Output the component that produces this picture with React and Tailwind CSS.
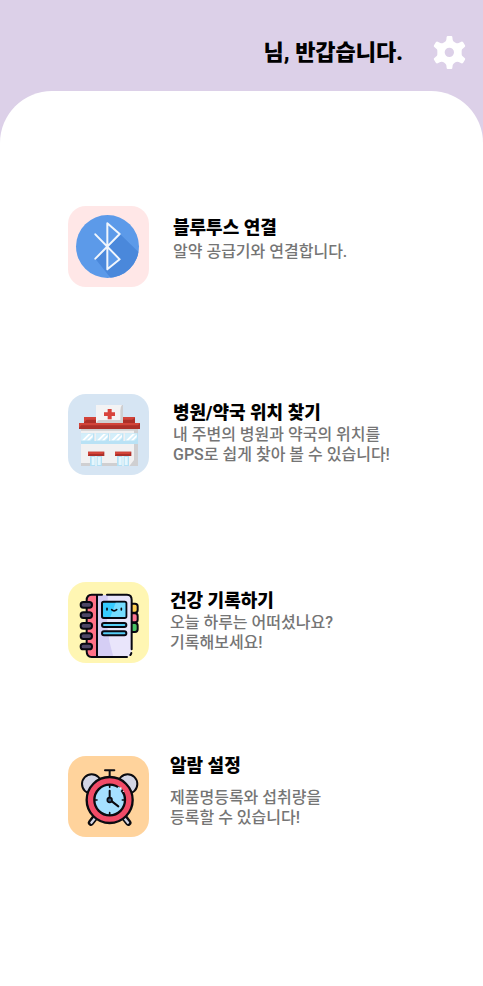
import React from 'react';

function GearIcon() {
  return (
    <svg viewBox="579 48 99 99" className="block size-[33px]" aria-hidden="true">
      <path
        fill="#fff"
        fillRule="evenodd"
        d="M620 50q1-2 3-2h11q3 0 3 3l1 8q1 5 6 8l4 2q4 2 8 0l8-4q3-1 5 1l6 10q2 3-1 5l-6 5q-3 2-3 6v11q0 4 3 6l6 5q3 2 1 5l-6 10q-2 2-5 1l-8-4q-4-2-8 0l-4 2q-5 3-6 8l-1 8q0 3-3 3h-11q-3 0-3-3l-1-8q-1-5-6-8l-4-2q-4-2-8 0l-8 4q-3 1-5-1l-6-10q-2-3 1-5l6-5q3-2 3-6v-11q0-4-3-6l-6-5q-3-2-1-5l6-10q2-2 5-1l8 4q4 2 8 0l4-2q5-3 6-8zM628 83a14 14 0 1 0 0 28a14 14 0 1 0 0-28z"
      />
    </svg>
  );
}

function BluetoothIcon() {
  return (
    <svg viewBox="24 24 243 243" className="block size-full" aria-hidden="true">
      <defs>
        <clipPath id="bt-disc">
          <circle cx="142.500" cy="145.500" r="94.500" />
        </clipPath>
      </defs>
      <circle cx="142.500" cy="145.500" r="94.500" fill="#5c9ae9" />
      <path d="M180 108L260 186V260H168L106 182L142 147V215L180 184L146 147z" fill="#4a88db" clipPath="url(#bt-disc)" />
      <path d="M106 109L179 184L142 214V76L179 108L106 182" fill="none" stroke="#f1f6fc" strokeWidth="6" strokeLinecap="round" strokeLinejoin="round" />
    </svg>
  );
}

function HospitalIcon() {
  return (
    <svg viewBox="24 24 243 243" className="block size-full" aria-hidden="true">
      <path d="M63 128H234V240H63z" fill="#f1f1f2" />
      <path d="M222 128H234V240H208L222 222z" fill="#cfcfd1" />
      <path d="M63 231H90V240H63zM125 231H171V240H125zM63 128H234V134H63z" fill="#cfcfd1" />
      <path d="M72 93H225V112H72z" fill="#ac2f29" />
      <path d="M72 93H108V101H80L72 109zM189 93H225V95L216 101H189z" fill="#d24339" />
      <path d="M57 111H240V129H57z" fill="#ac2f29" />
      <path d="M57 111H240L234 118H64L57 125z" fill="#d24339" />
      <path d="M108 57H189V111H108z" fill="#cfcfd1" />
      <path d="M108 57H186Q181 62 181 74V102H116L108 110z" fill="#f3f3f4" />
      <path d="M143 69H155V79H165V90H155V100H143V90H132V79H143z" fill="#d8433b" />
      <path d="M63 142H234V174H63z" fill="#b9e2f5" />
      {[63, 108, 151, 195].map((x) => (
        <g key={x}>
          <path d={`M${x} 142H${x + 36}V156L${x + 28} 164H${x}z`} fill="#d3eefa" />
          <path d={`M${x + 3} 163L${x + 22} 144H${x + 30}L${x + 11} 163zM${x + 18} 163L${x + 35} 146V153L${x + 25} 163z`} fill="#fff" />
        </g>
      ))}
      <path d="M103 142H108V165H103zM147 142H151V165H147zM190 142H195V165H190z" fill="#f1f1f2" />
      {[84, 165].map((x) => (
        <g key={x}>
          <path d={`M${x + 6} 209H${x + 42}V240H${x + 6}z`} fill="#b3e0f5" />
          <path d={`M${x + 11} 213H${x + 20}V237H${x + 11}zM${x + 29} 213H${x + 38}V237H${x + 29}z`} fill="#e5f6fd" />
          <path d={`M${x + 22} 209H${x + 26}V240H${x + 22}z`} fill="#f1f6f8" />
          <path d={`M${x} 197H${x + 49}V210H${x}z`} fill="#ac2f29" />
          <path d={`M${x} 197H${x + 49}L${x + 44} 204H${x + 4}L${x} 208z`} fill="#d24339" />
        </g>
      ))}
    </svg>
  );
}

function NotebookIcon() {
  return (
    <svg viewBox="24 24 243 243" className="block size-full" aria-hidden="true">
      <g stroke="#080811" strokeWidth="6">
        <rect x="207" y="89" width="26" height="27" rx="8" fill="#ffd052" />
        <rect x="207" y="118" width="26" height="27" rx="8" fill="#ff7791" />
        <rect x="207" y="147" width="26" height="27" rx="8" fill="#49c464" />
      </g>
      <path d="M95 63H203Q215 63 215 78V234Q215 248 203 248H95Q81 248 81 232V79Q81 63 95 63z" fill="#e9e5fb" />
      <path d="M111 63H144Q132 160 160 248H111z" fill="#d5cef5" />
      <path d="M95 63H111V248H95Q81 248 81 232V79Q81 63 95 63z" fill="#ff7187" />
      <path d="M126 62H95Q80 62 80 79V232Q80 249 95 249H201M141 62H201Q215 62 215 78V226M214 237Q213 241 211 243M111 62V249" fill="none" stroke="#080811" strokeWidth="6" strokeLinecap="round" />
      <g stroke="#080811" strokeWidth="6">
        {[84, 115, 147, 178, 209].map((y) => (
          <rect key={y} x="62" y={y} width="34" height="17" rx="8" fill="#4d4666" />
        ))}
        <rect x="126" y="83" width="73" height="49" rx="5" fill="#35cbff" />
        <rect x="126" y="147" width="73" height="12" rx="6" fill="#54cef6" />
        <rect x="126" y="172" width="73" height="12" rx="6" fill="#54cef6" />
      </g>
      <path d="M167 86H196V129H151z" fill="#75dcff" />
      <path d="M141 103V108M184 103V108M155 107Q162 114 170 107" fill="none" stroke="#080811" strokeWidth="5" strokeLinecap="round" />
    </svg>
  );
}

function AlarmIcon() {
  return (
    <svg viewBox="24 24 243 243" className="block size-full" aria-hidden="true">
      <g stroke="#0b0b10" strokeLinecap="round">
        <circle cx="95" cy="108" r="29" fill="#d3d5e4" strokeWidth="6" />
        <circle cx="203" cy="108" r="29" fill="#d3d5e4" strokeWidth="6" />
        <path d="M106 207L93 224M192 207L205 224" strokeWidth="19" />
        <path d="M106 209L94 224M192 209L204 224" stroke="#d3d5e4" strokeWidth="7" />
        <path d="M135 67H163M149 67V87" strokeWidth="6" />
        <circle cx="149" cy="156" r="69" fill="#f14b67" strokeWidth="7" />
        <circle cx="149" cy="156" r="46" fill="#a5e0ff" strokeWidth="7" />
        <path d="M149 113V118M149 194V199M106 156H111M187 156H192" strokeWidth="5" />
        <path d="M149 128V155L175 175" fill="none" strokeWidth="6" />
        <circle cx="149" cy="156" r="7" fill="#345778" strokeWidth="5" />
      </g>
      <path d="M173 119L183 128" stroke="#a5e0ff" strokeWidth="9" />
      <circle cx="182" cy="121" r="3" fill="#fff" />
      <circle cx="190" cy="130" r="2" fill="#fff" />
    </svg>
  );
}

const items = [
  {
    title: '블루투스 연결',
    lines: ['알약 공급기와 연결합니다.'],
    Icon: BluetoothIcon,
    tile: 'bg-[#ffe7e7]',
    row: 'gap-6',
    text: 'gap-0.5 pt-2.5',
  },
  {
    title: '병원/약국 위치 찾기',
    lines: ['내 주변의 병원과 약국의 위치를', 'GPS로 쉽게 찾아 볼 수 있습니다!'],
    Icon: HospitalIcon,
    tile: 'bg-[#d6e5f3]',
    row: 'mt-[107px] gap-6',
    text: 'pt-[7px]',
  },
  {
    title: '건강 기록하기',
    lines: ['오늘 하루는 어떠셨나요?', '기록해보세요!'],
    Icon: NotebookIcon,
    tile: 'bg-[#fff6b3]',
    row: 'mt-[107px] gap-[21px]',
    text: 'pt-[7px]',
  },
  {
    title: '알람 설정',
    lines: ['제품명등록와 섭취량을', '등록할 수 있습니다!'],
    Icon: AlarmIcon,
    tile: 'bg-[#ffd39c]',
    row: 'mt-[93px] gap-[21px]',
    text: '-mt-0.5 gap-2.5',
  },
];

function MenuItem({ item }) {
  const { title, lines, Icon, tile, row, text } = item;
  return (
    <li>
      <button type="button" className={`flex w-full items-start text-left ${row}`}>
        <span className={`size-[81px] shrink-0 overflow-hidden rounded-[18px] ${tile}`}>
          <Icon />
        </span>
        <span className={`flex min-w-0 flex-col ${text}`}>
          <span className="text-[18px] leading-6 font-black whitespace-nowrap text-black">{title}</span>
          <span className="text-[16px] leading-5 font-medium whitespace-nowrap text-[#757575]">
            {lines.map((line) => (
              <span key={line} className="block">
                {line}
              </span>
            ))}
          </span>
        </span>
      </button>
    </li>
  );
}

export default function App() {
  return (
    <div className="flex min-h-screen flex-col bg-[#dcd0e8] font-[Roboto,'Noto_Sans_CJK_KR',sans-serif]">
      <header className="flex items-center justify-end gap-[30px] pt-9 pr-[17px] pb-[22px]">
        <h1 className="text-[22px] leading-[33px] font-black text-black">님, 반갑습니다.</h1>
        <button type="button" aria-label="설정">
          <GearIcon />
        </button>
      </header>
      <main className="grow rounded-t-[52px] bg-white pt-[115px] pr-4 pb-12 pl-[68px]">
        <ul>
          {items.map((item) => (
            <MenuItem key={item.title} item={item} />
          ))}
        </ul>
      </main>
    </div>
  );
}
